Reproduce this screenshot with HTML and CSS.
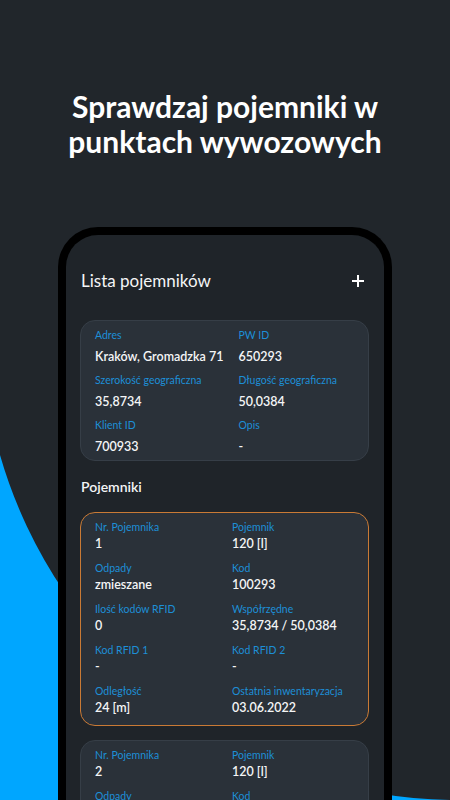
FILE: index.html
```html
<!DOCTYPE html>
<html lang="pl">
<head>
<meta charset="utf-8">
<link rel="stylesheet" href="styles.css">
</head>
<body>
<div class="page">
  <svg class="bg-shape" width="450" height="800" viewBox="0 0 450 800" aria-hidden="true">
    <path d="M0 455 A477 477 0 0 0 452 800 L0 800 Z" fill="#00a6ff"/>
  </svg>
  <h1 class="title">Sprawdzaj pojemniki w<br>punktach wywozowych</h1>
  <div class="phone">
    <div class="screen">
      <div class="header">
        <span class="header-title">Lista pojemników</span>
        <svg class="plus" width="14" height="14" viewBox="0 0 14 14"><path d="M7 1v12M1 7h12" stroke="#fff" stroke-width="2" fill="none"/></svg>
      </div>
      <div class="card info">
        <div class="cell"><div class="label">Adres</div><div class="value">Kraków, Gromadzka 71</div></div>
        <div class="cell"><div class="label">PW ID</div><div class="value">650293</div></div>
        <div class="cell"><div class="label">Szerokość geograficzna</div><div class="value">35,8734</div></div>
        <div class="cell"><div class="label">Długość geograficzna</div><div class="value">50,0384</div></div>
        <div class="cell"><div class="label">Klient ID</div><div class="value">700933</div></div>
        <div class="cell"><div class="label">Opis</div><div class="value">-</div></div>
      </div>
      <div class="section-title">Pojemniki</div>
      <div class="card bin active">
        <div class="cell"><div class="label">Nr. Pojemnika</div><div class="value">1</div></div>
        <div class="cell"><div class="label">Pojemnik</div><div class="value">120 [l]</div></div>
        <div class="cell"><div class="label">Odpady</div><div class="value">zmieszane</div></div>
        <div class="cell"><div class="label">Kod</div><div class="value">100293</div></div>
        <div class="cell"><div class="label">Ilość kodów RFID</div><div class="value">0</div></div>
        <div class="cell"><div class="label">Współrzędne</div><div class="value">35,8734 / 50,0384</div></div>
        <div class="cell"><div class="label">Kod RFID 1</div><div class="value">-</div></div>
        <div class="cell"><div class="label">Kod RFID 2</div><div class="value">-</div></div>
        <div class="cell"><div class="label">Odległość</div><div class="value">24 [m]</div></div>
        <div class="cell"><div class="label">Ostatnia inwentaryzacja</div><div class="value">03.06.2022</div></div>
      </div>
      <div class="card bin">
        <div class="cell"><div class="label">Nr. Pojemnika</div><div class="value">2</div></div>
        <div class="cell"><div class="label">Pojemnik</div><div class="value">120 [l]</div></div>
        <div class="cell"><div class="label">Odpady</div><div class="value">zmieszane</div></div>
        <div class="cell"><div class="label">Kod</div><div class="value">100294</div></div>
      </div>
    </div>
  </div>
</div>
</body>
</html>
```
FILE: styles.css
```css
* { box-sizing: border-box; }
html, body { margin: 0; padding: 0; }
body {
  background: #21262b;
  font-family: Lato, "Liberation Sans", sans-serif;
  color: #f4f5f6;
}
.page {
  position: relative;
  width: 450px;
  height: 800px;
  overflow: hidden;
  display: flex;
  flex-direction: column;
  align-items: center;
}
.bg-shape {
  position: absolute;
  left: 0;
  top: 0;
}
.title {
  position: relative;
  margin: 89px 0 0;
  font-family: Lato, sans-serif;
  font-weight: 700;
  font-size: 30px;
  line-height: 35px;
  text-align: center;
  color: #ffffff;
}
.phone {
  position: relative;
  margin-top: 68px;
  width: 334px;
  flex: 1 0 auto;
  border: 8px solid #000;
  border-bottom: none;
  border-radius: 40px 40px 0 0;
  background: #1f2429;
}
.screen {
  padding: 34px 15px 0 14px;
  display: flex;
  flex-direction: column;
}
.header {
  display: flex;
  justify-content: space-between;
  align-items: center;
  height: 24px;
  padding-left: 1px;
  padding-right: 4px;
}
.header-title {
  font-size: 17px;
  line-height: 24px;
  font-weight: 400;
}
.plus { display: block; }
.card {
  background: #2a3139;
  border: 1px solid #363e47;
  border-radius: 15px;
  display: grid;
  grid-template-columns: 1fr 1fr;
  column-gap: 15px;
  padding: 7px 14px 4px;
}
.info {
  margin-top: 27px;
  row-gap: 7px;
}
.info .label { margin-bottom: 6px; }
.label {
  font-size: 10.5px;
  line-height: 14px;
  color: #1d8fd7;
  white-space: nowrap;
}
.value {
  font-size: 12.5px;
  line-height: 18px;
  font-weight: 600;
  color: #f4f5f6;
  white-space: nowrap;
}
.section-title {
  margin: 16px 0 15px 1px;
  font-size: 14px;
  line-height: 20px;
  font-weight: 600;
}
.bin {
  row-gap: 8px;
  padding: 7px 14px 8px;
  margin-bottom: 14px;
}
.bin .label { margin-bottom: 1px; }
.bin.active { border-color: #c97a35; }
```
